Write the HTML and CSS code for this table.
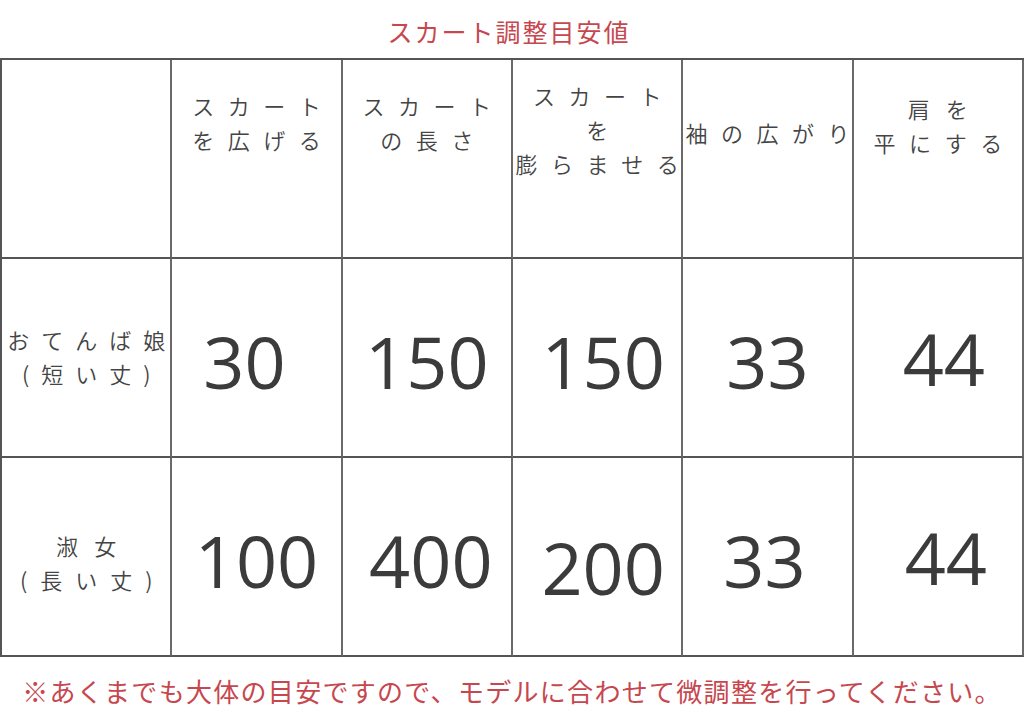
FILE: index.html
```html
<!DOCTYPE html>
<html lang="ja">
<head>
<meta charset="utf-8">
<title>スカート調整目安値</title>
<link rel="stylesheet" href="styles.css">
</head>
<body>
<div class="page">
  <h1 class="title">スカート調整目安値</h1>
  <div class="grid">
    <div class="cell head"></div>
    <div class="cell head hi"><span class="ln">スカート</span><span class="ln">を広げる</span></div>
    <div class="cell head hi"><span class="ln">スカート</span><span class="ln">の長さ</span></div>
    <div class="cell head"><span class="ln">スカート</span><span class="ln">を</span><span class="ln">膨らませる</span></div>
    <div class="cell head lo"><span class="ln">袖の広がり</span></div>
    <div class="cell head mid"><span class="ln wide">肩を</span><span class="ln">平にする</span></div>

    <div class="cell label"><span class="ln">おてんば娘</span><span class="ln">(短い丈)</span></div>
    <div class="cell num"><span class="n sh-30">30</span></div>
    <div class="cell num"><span class="n">150</span></div>
    <div class="cell num"><span class="n sh-r">150</span></div>
    <div class="cell num"><span class="n">33</span></div>
    <div class="cell num"><span class="n sh-r up">44</span></div>

    <div class="cell label low"><span class="ln wide2">淑女</span><span class="ln wide">(長い丈)</span></div>
    <div class="cell num"><span class="n">100</span></div>
    <div class="cell num"><span class="n sh-r2">400</span></div>
    <div class="cell num"><span class="n sh-r down">200</span></div>
    <div class="cell num"><span class="n sh-l">33</span></div>
    <div class="cell num"><span class="n sh-r3 up">44</span></div>
  </div>
  <p class="note">※あくまでも大体の目安ですので、モデルに合わせて微調整を行ってください。</p>
</div>
</body>
</html>
```

FILE: styles.css
```css
html, body {
  margin: 0;
  padding: 0;
  background: #ffffff;
}

body {
  font-family: "Noto Sans CJK JP", "Noto Sans", sans-serif;
  color: #444444;
}

.page {
  width: 1024px;
  height: 723px;
  overflow: hidden;
}

.title {
  margin: 0;
  height: 58px;
  padding-top: 4px;
  box-sizing: border-box;
  display: flex;
  align-items: center;
  justify-content: center;
  padding-right: 6px;
  font-size: 25px;
  font-weight: 400;
  letter-spacing: 2px;
  color: #c7474f;
}

.grid {
  width: 1022px;
  display: grid;
  grid-template-columns: repeat(6, 1fr);
  grid-auto-rows: 199px;
  border-top: 2px solid #555555;
  border-left: 2px solid #555555;
}

.cell {
  box-sizing: border-box;
  border-right: 2px solid #6a6a6a;
  border-bottom: 2px solid #555555;
  display: flex;
  flex-direction: column;
  align-items: center;
  justify-content: center;
  min-width: 0;
}

.ln {
  display: block;
  white-space: nowrap;
  font-size: 22px;
  line-height: 34px;
  font-weight: 350;
  letter-spacing: 13.5px;
  margin-right: -13.5px;
  color: #444444;
}

.head {
  padding-bottom: 60px;
}

.head.hi {
  padding-bottom: 74px;
}

.head.lo {
  padding-bottom: 54px;
}

.head.mid {
  padding-bottom: 68px;
}

.head .ln.wide {
  letter-spacing: 16px;
  margin-right: -16px;
}

.label .ln {
  letter-spacing: 12px;
  margin-right: -12px;
}

.label .ln.wide {
  letter-spacing: 13px;
  margin-right: -13px;
}

.label .ln.wide2 {
  letter-spacing: 16px;
  margin-right: -16px;
}

.label {
  padding-bottom: 4px;
}

.label.low {
  padding-top: 10px;
  padding-bottom: 0;
}

.n {
  font-family: "Open Sans", "Noto Sans", sans-serif;
  font-size: 72px;
  line-height: 1;
  color: #3b3b3b;
  position: relative;
  top: 3px;
}

.sh-30 { left: -12px; }
.sh-r { left: 6px; }
.sh-r2 { left: 4px; }
.sh-r3 { left: 8px; }
.sh-l { left: -3px; }
.up { top: 0; }
.down { top: 10px; }

.note {
  margin: 17px 0 0;
  text-align: center;
  font-size: 26px;
  line-height: 34px;
  letter-spacing: 1.3px;
  font-weight: 400;
  color: #c7474f;
}
```
